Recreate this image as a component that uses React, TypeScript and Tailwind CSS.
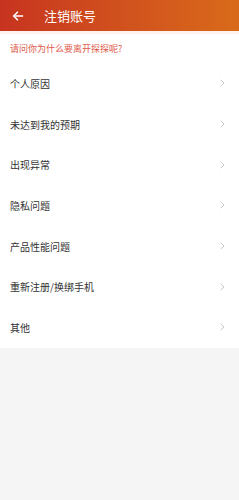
import React from 'react';

const reasons = ['个人原因', '未达到我的预期', '出现异常', '隐私问题', '产品性能问题', '重新注册/换绑手机', '其他'];

export default function App() {
    return (
        <div
            className="min-h-[500px] bg-[#f5f5f5]"
            style={{ fontFamily: '"Noto Sans CJK SC", "Noto Sans", sans-serif' }}
        >
            <div className="h-[31px] flex items-center bg-gradient-to-r from-[#c7331f] to-[#d96a1a]">
                <div className="w-[34px] flex justify-center pl-[1px]">
                    <svg width="12" height="12" viewBox="0 0 12 12" fill="none" stroke="white" strokeWidth="1.6" strokeLinecap="round" strokeLinejoin="round">
                        <path d="M10.5 6H1.8" />
                        <path d="M5.5 2.2L1.7 6l3.8 3.8" />
                    </svg>
                </div>
                <span className="ml-[10px] text-[13px] text-white">注销账号</span>
            </div>
            <div className="h-[3px] bg-[#fdf2ee]" />
            <div className="bg-white">
                <div className="h-[29px] flex items-center px-[10px] text-[9px] text-[#e0584a]">
                    请问你为什么要离开探探呢?
                </div>
                {reasons.map((r) => (
                    <div key={r} className="h-[40.7px] flex items-center justify-between pl-[10px] pr-[14px]">
                        <span className="text-[10px] text-[#333]">{r}</span>
                        <svg width="5" height="8" viewBox="0 0 5 8" fill="none" stroke="#c8c8c8" strokeWidth="1" strokeLinecap="round" strokeLinejoin="round">
                            <path d="M1 1l3 3-3 3" />
                        </svg>
                    </div>
                ))}
            </div>
        </div>
    );
}
